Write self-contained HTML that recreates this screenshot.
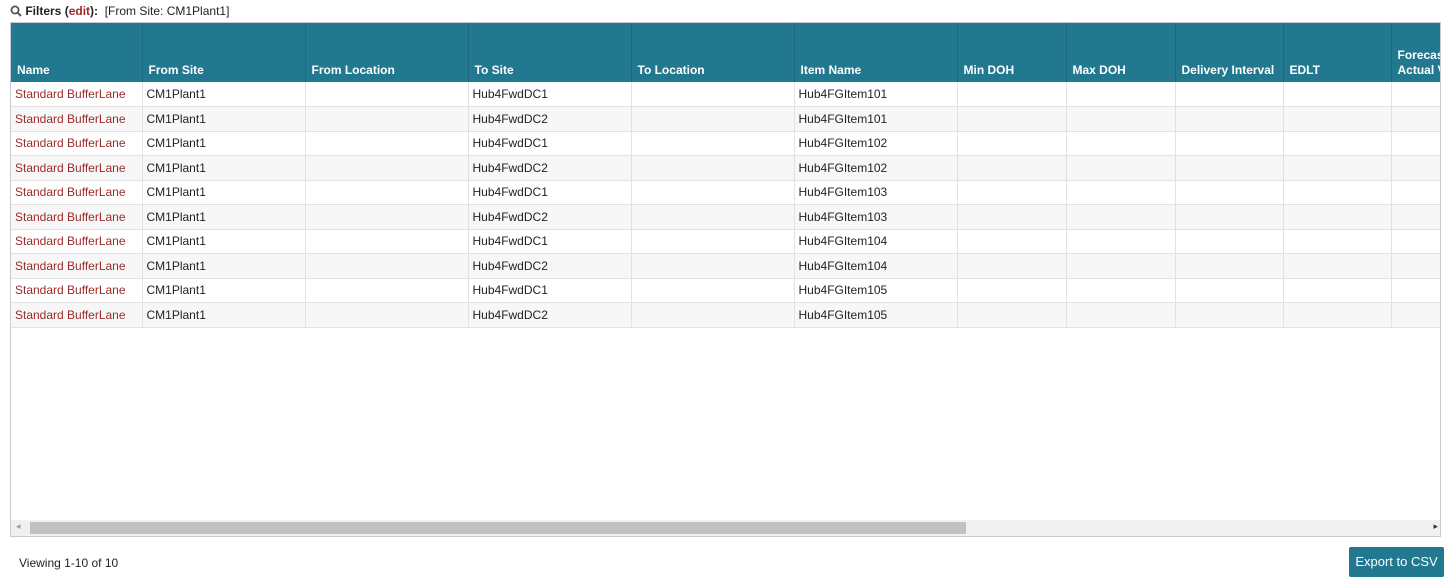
<!DOCTYPE html>
<html><head><style>
*{margin:0;padding:0;box-sizing:border-box}
body{width:1449px;height:585px;background:#fff;font-family:"Liberation Sans",sans-serif;font-size:12px;color:#222;position:relative;overflow:hidden}
.f{position:absolute;left:10px;top:4px;font-size:12px;white-space:nowrap}
.box{position:absolute;left:10px;top:22px;width:1431px;height:515px;border:1px solid #c8cbd6;overflow:hidden}
table{border-collapse:collapse;table-layout:fixed;position:absolute;left:0;top:0;width:1430px}
th{background:#21788f;color:#fff;font-weight:bold;text-align:left;vertical-align:bottom;height:59px;padding:0 6px 4px;border-right:1px solid #1a6b80;white-space:nowrap;overflow:hidden;line-height:15px}
td{height:24.5px;padding:0 4px;border-right:1px solid #e2e2e2;border-bottom:1px solid #e2e2e2;white-space:nowrap;overflow:hidden}
tr:nth-child(odd) td{background:#f7f7f7}
td.n{color:#9b2a2a}
.sb{position:absolute;left:0;bottom:0;width:1431px;height:16px;background:#f0f0f0}
.th{position:absolute;left:19px;top:2px;width:936px;height:12px;background:#c1c1c1}
.btn{position:absolute;left:1349px;top:547px;width:95px;height:30px;background:#21788f;color:#fff;font-size:13px;text-align:center;line-height:30px;border-radius:2px}
</style></head><body>
<div class="f"><svg width="12" height="12" viewBox="0 0 12 12" style="vertical-align:-2px"><circle cx="5" cy="5" r="3.6" fill="none" stroke="#555" stroke-width="1.8"/><line x1="7.6" y1="7.6" x2="11" y2="11" stroke="#555" stroke-width="2"/></svg> <b>Filters (<span style="color:#9b2a2a">edit</span>):</b> &nbsp;[From Site: CM1Plant1]</div>
<div class="box">
<table>
<colgroup><col style="width:131px"><col style="width:163px"><col style="width:163px"><col style="width:163px"><col style="width:163px"><col style="width:163px"><col style="width:109px"><col style="width:109px"><col style="width:108px"><col style="width:108px"><col style="width:50px"></colgroup>
<tr><th>Name</th><th>From Site</th><th>From Location</th><th>To Site</th><th>To Location</th><th>Item Name</th><th>Min DOH</th><th>Max DOH</th><th>Delivery Interval</th><th>EDLT</th><th>Forecast<br>Actual V</th></tr>
<tr><td class="n">Standard BufferLane</td><td>CM1Plant1</td><td></td><td>Hub4FwdDC1</td><td></td><td>Hub4FGItem101</td><td></td><td></td><td></td><td></td><td></td></tr>
<tr><td class="n">Standard BufferLane</td><td>CM1Plant1</td><td></td><td>Hub4FwdDC2</td><td></td><td>Hub4FGItem101</td><td></td><td></td><td></td><td></td><td></td></tr>
<tr><td class="n">Standard BufferLane</td><td>CM1Plant1</td><td></td><td>Hub4FwdDC1</td><td></td><td>Hub4FGItem102</td><td></td><td></td><td></td><td></td><td></td></tr>
<tr><td class="n">Standard BufferLane</td><td>CM1Plant1</td><td></td><td>Hub4FwdDC2</td><td></td><td>Hub4FGItem102</td><td></td><td></td><td></td><td></td><td></td></tr>
<tr><td class="n">Standard BufferLane</td><td>CM1Plant1</td><td></td><td>Hub4FwdDC1</td><td></td><td>Hub4FGItem103</td><td></td><td></td><td></td><td></td><td></td></tr>
<tr><td class="n">Standard BufferLane</td><td>CM1Plant1</td><td></td><td>Hub4FwdDC2</td><td></td><td>Hub4FGItem103</td><td></td><td></td><td></td><td></td><td></td></tr>
<tr><td class="n">Standard BufferLane</td><td>CM1Plant1</td><td></td><td>Hub4FwdDC1</td><td></td><td>Hub4FGItem104</td><td></td><td></td><td></td><td></td><td></td></tr>
<tr><td class="n">Standard BufferLane</td><td>CM1Plant1</td><td></td><td>Hub4FwdDC2</td><td></td><td>Hub4FGItem104</td><td></td><td></td><td></td><td></td><td></td></tr>
<tr><td class="n">Standard BufferLane</td><td>CM1Plant1</td><td></td><td>Hub4FwdDC1</td><td></td><td>Hub4FGItem105</td><td></td><td></td><td></td><td></td><td></td></tr>
<tr><td class="n">Standard BufferLane</td><td>CM1Plant1</td><td></td><td>Hub4FwdDC2</td><td></td><td>Hub4FGItem105</td><td></td><td></td><td></td><td></td><td></td></tr>
</table>
<div class="sb"><div class="th"></div><span style="position:absolute;left:5px;top:1px;font-size:9px;color:#999">◂</span><span style="position:absolute;right:4px;top:1px;font-size:9px;color:#333">▸</span></div>
</div>
<div style="position:absolute;left:19px;top:556px;font-size:12px">Viewing 1-10 of 10</div>
<div class="btn">Export to CSV</div>
</body></html>
